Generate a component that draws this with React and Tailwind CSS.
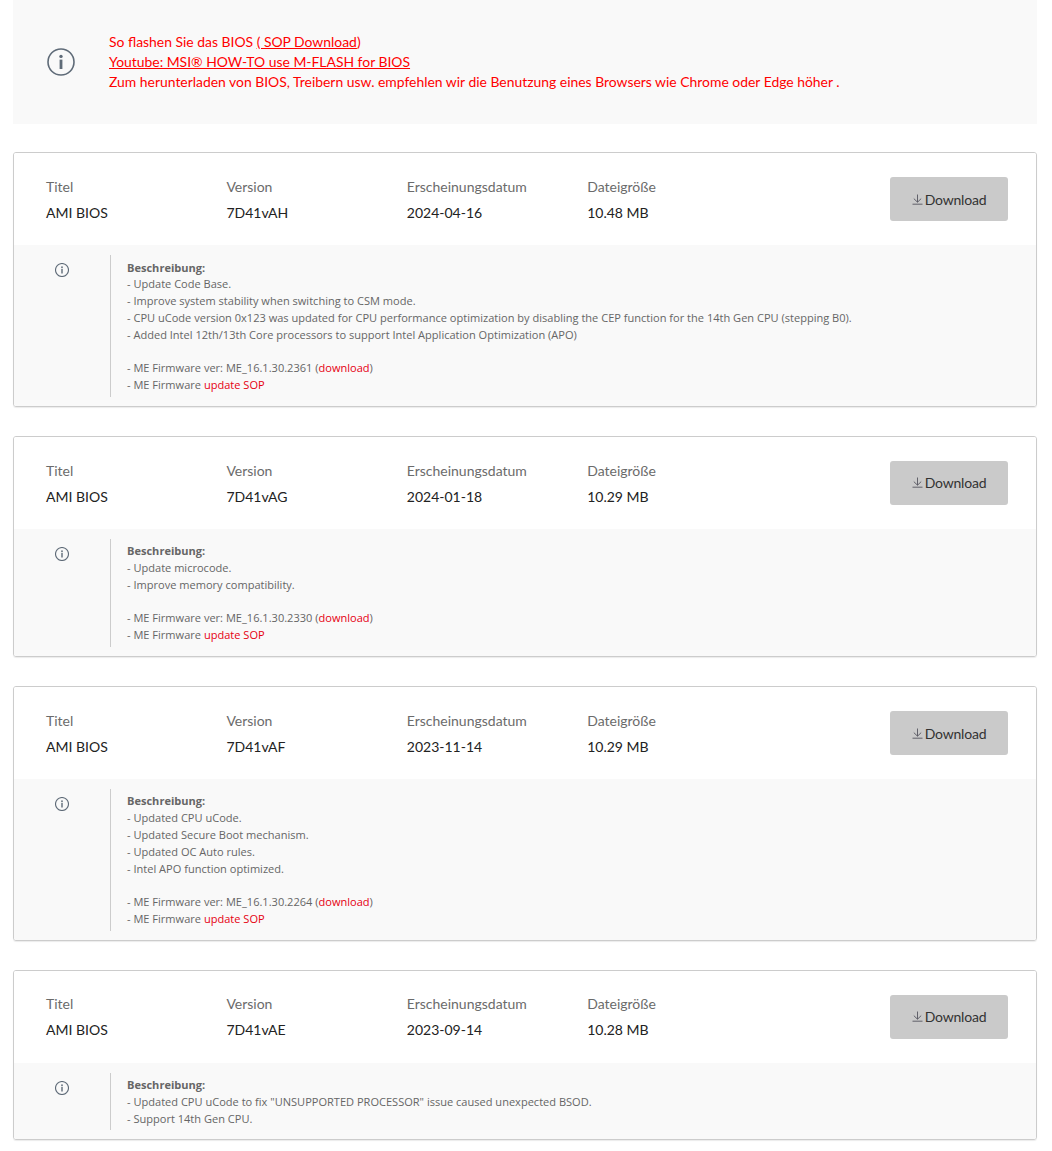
const font = { fontFamily: 'Lato, sans-serif' };
const smallFont = { fontFamily: '"Open Sans", sans-serif' };

function InfoIcon({ className, stroke = 1.6 }) {
  return (
    <svg viewBox="0 0 28 28" className={className} fill="none">
      <circle cx="14" cy="14" r="13" stroke="#5f6b78" strokeWidth={stroke} />
      <circle cx="14" cy="8.4" r="1.7" fill="#5f6b78" />
      <rect x="12.6" y="11.6" width="2.8" height="9.4" fill="#5f6b78" />
    </svg>
  );
}

function DownloadIcon() {
  return (
    <svg viewBox="0 0 11 11" className="w-[11px] h-[11px] shrink-0" fill="none" stroke="#55555f" strokeWidth="0.9">
      <path d="M5.5 0.5V8M1.8 4.6L5.5 8.2L9.2 4.6M0.5 10.2H10.5" />
    </svg>
  );
}

const Red = ({ children }) => <span className="text-[#e60012]">{children}</span>;

function BiosCard({ version, date, size, lines, firmware }) {
  return (
    <div className="border border-[#cccccc] rounded-[3px] overflow-hidden shadow-[0_1px_1px_rgba(0,0,0,0.08)]">
      <div className="h-[92px] flex items-center pl-[32px] pr-[28px] bg-white">
        <div className="flex-1 grid grid-cols-[180.4px_180.4px_180.4px_1fr] text-[14px] leading-[26px] pt-[1.66px]">
          <div className="text-[#6b6b6b]">Titel</div>
          <div className="text-[#6b6b6b]">Version</div>
          <div className="text-[#6b6b6b]">Erscheinungsdatum</div>
          <div className="text-[#6b6b6b]">Dateigröße</div>
          <div className="text-[#222222]">AMI BIOS</div>
          <div className="text-[#222222]">{version}</div>
          <div className="text-[#222222]">{date}</div>
          <div className="text-[#222222]">{size}</div>
        </div>
        <button className="w-[118px] h-[44px] pt-[0.4px] rounded-[3px] bg-[#cacaca] flex items-center justify-center gap-[2px] text-[14px] tracking-[-0.2px] text-[#333333]">
          <DownloadIcon />
          Download
        </button>
      </div>
      <div className="bg-[#f9f9f9] flex pt-[10px] pb-[9px]">
        <div className="w-[96px] shrink-0 flex justify-center pt-[8px]">
          <InfoIcon className="w-[14px] h-[14px]" stroke={2.2} />
        </div>
        <div className="border-l border-[#cccccc] pl-[16px] pt-[4.5px] pb-[2.9px] text-[11.05px] leading-[16.8px] text-[#666666]" style={smallFont}>
          <div className="font-bold">Beschreibung:</div>
          {lines.map((line) => (
            <div key={line}>{line}</div>
          ))}
          {firmware && (
            <>
              <div className="h-[16.8px]" />
              <div>
                - ME Firmware ver: {firmware} (<Red>download</Red>)
              </div>
              <div>
                - ME Firmware <Red>update SOP</Red>
              </div>
            </>
          )}
        </div>
      </div>
    </div>
  );
}

export default function App() {
  return (
    <div className="min-h-[1151px] bg-white px-[13px] pr-[15px]" style={font}>
      <div className="h-[124px] bg-[#f9f9f9] flex items-center pl-[34px]">
        <InfoIcon className="w-[28px] h-[28px] shrink-0" />
        <div className="ml-[34px] text-[13.92px] leading-[20px] text-[#ff0000]">
          <div>
            So flashen Sie das BIOS <span className="underline">( SOP Download</span>)
          </div>
          <div className="underline">Youtube: MSI® HOW-TO use M-FLASH for BIOS</div>
          <div>Zum herunterladen von BIOS, Treibern usw. empfehlen wir die Benutzung eines Browsers wie Chrome oder Edge höher .</div>
        </div>
      </div>
      <div className="mt-[28px] flex flex-col gap-[28.95px]">
        <BiosCard
          version="7D41vAH"
          date="2024-04-16"
          size="10.48 MB"
          firmware="ME_16.1.30.2361"
          lines={[
            '- Update Code Base.',
            '- Improve system stability when switching to CSM mode.',
            '- CPU uCode version 0x123 was updated for CPU performance optimization by disabling the CEP function for the 14th Gen CPU (stepping B0).',
            '- Added Intel 12th/13th Core processors to support Intel Application Optimization (APO)',
          ]}
        />
        <BiosCard
          version="7D41vAG"
          date="2024-01-18"
          size="10.29 MB"
          firmware="ME_16.1.30.2330"
          lines={['- Update microcode.', '- Improve memory compatibility.']}
        />
        <BiosCard
          version="7D41vAF"
          date="2023-11-14"
          size="10.29 MB"
          firmware="ME_16.1.30.2264"
          lines={[
            '- Updated CPU uCode.',
            '- Updated Secure Boot mechanism.',
            '- Updated OC Auto rules.',
            '- Intel APO function optimized.',
          ]}
        />
        <BiosCard
          version="7D41vAE"
          date="2023-09-14"
          size="10.28 MB"
          lines={[
            '- Updated CPU uCode to fix "UNSUPPORTED PROCESSOR" issue caused unexpected BSOD.',
            '- Support 14th Gen CPU.',
          ]}
        />
      </div>
    </div>
  );
}
